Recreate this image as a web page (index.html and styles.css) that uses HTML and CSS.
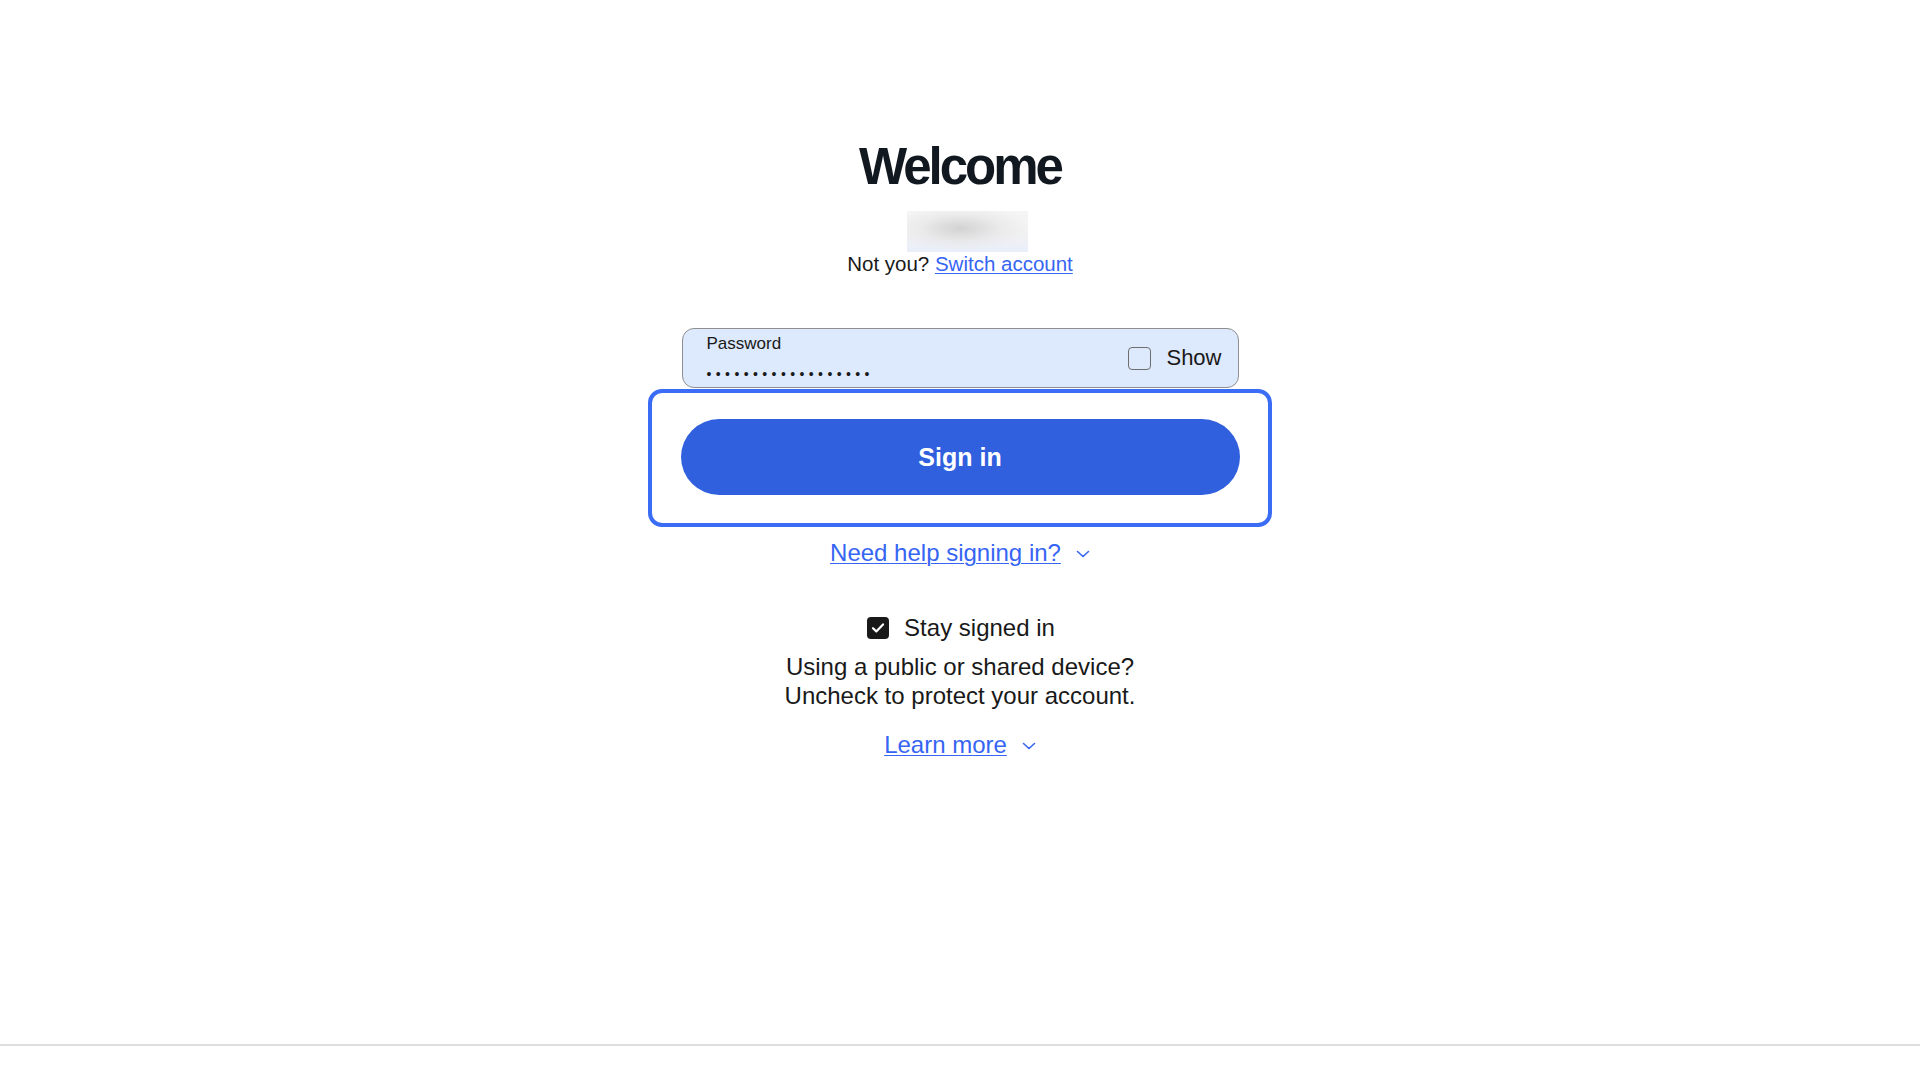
FILE: index.html
```html
<!DOCTYPE html>
<html lang="en">
<head>
<meta charset="utf-8">
<title>Sign in</title>
<link rel="stylesheet" href="styles.css">
</head>
<body>
<div class="page">
  <main class="signin">
    <h1 class="title">Welcome</h1>
    <div class="user-blur" aria-hidden="true"></div>
    <p class="not-you">Not you? <a href="#" class="link">Switch account</a></p>

    <div class="field">
      <div class="field-main">
        <div class="field-label">Password</div>
        <div class="field-dots">••••••••••••••••••</div>
      </div>
      <label class="show">
        <span class="box"></span>
        <span class="show-text">Show</span>
      </label>
    </div>

    <div class="focus-ring">
      <button class="btn" type="button">Sign in</button>
    </div>

    <div class="help">
      <a href="#" class="link">Need help signing in?</a>
      <svg class="chev" width="14" height="8" viewBox="0 0 14 8"><path d="M1.5 1.5 L7 6.5 L12.5 1.5" fill="none" stroke="#3665f3" stroke-width="1.6" stroke-linecap="round" stroke-linejoin="round"/></svg>
    </div>

    <div class="stay">
      <span class="check">
        <svg width="14" height="12" viewBox="0 0 14 12"><path d="M2 6.2 L5.3 9.4 L12 2.4" fill="none" stroke="#fff" stroke-width="2.2" stroke-linecap="round" stroke-linejoin="round"/></svg>
      </span>
      <span>Stay signed in</span>
    </div>
    <p class="note">Using a public or shared device?<br>Uncheck to protect your account.</p>

    <div class="learn">
      <a href="#" class="link">Learn more</a>
      <svg class="chev" width="14" height="8" viewBox="0 0 14 8"><path d="M1.5 1.5 L7 6.5 L12.5 1.5" fill="none" stroke="#3665f3" stroke-width="1.6" stroke-linecap="round" stroke-linejoin="round"/></svg>
    </div>
  </main>
</div>
<footer class="footer"></footer>
</body>
</html>
```
FILE: styles.css
```css
* { box-sizing: border-box; }
html, body { margin: 0; padding: 0; background: #fff; }
body {
  font-family: "Liberation Sans", Arial, sans-serif;
  color: #191919;
}
.page {
  min-height: 1044px;
}
.signin {
  width: 557px;
  margin: 0 auto;
  padding-top: 141px;
  display: flex;
  flex-direction: column;
  align-items: center;
}
.title {
  margin: 0;
  font-size: 51px;
  line-height: 51px;
  font-weight: 700;
  letter-spacing: -3px;
  color: #111820;
}
.user-blur {
  margin-top: 19px;
  margin-left: 15px;
  width: 121px;
  height: 41px;
  background:
    radial-gradient(ellipse 55% 55% at 44% 42%, rgba(205,205,205,0.85), rgba(228,228,229,0.55) 60%, rgba(246,246,247,0) 100%),
    linear-gradient(to bottom, #f5f5f5 0%, #f1f1f2 60%, #e9eefa 100%);
}
.not-you {
  margin: 0;
  font-size: 20.5px;
  line-height: 24px;
  color: #191919;
}
.link {
  color: #3665f3;
  text-decoration: underline;
  text-underline-offset: 2px;
  text-decoration-thickness: 1px;
}
.field {
  margin-top: 52px;
  width: 557px;
  height: 60px;
  border: 1px solid #8f8f8f;
  border-radius: 12px;
  background: #dde9fc;
  display: flex;
  align-items: center;
  padding: 0 16px 0 24px;
}
.field-main {
  flex: 1;
  align-self: stretch;
  padding-top: 5px;
}
.field-label {
  font-size: 17px;
  line-height: 20px;
  color: #191919;
}
.field-dots {
  margin-top: 12px;
  font-size: 14px;
  line-height: 16px;
  letter-spacing: 4.4px;
  color: #191919;
}
.show {
  display: flex;
  align-items: center;
  gap: 15px;
}
.box {
  width: 23px;
  height: 23px;
  border: 1.5px solid #6e6e6e;
  border-radius: 4px;
}
.show-text {
  font-size: 22px;
  line-height: 26px;
}
.focus-ring {
  margin-top: 1px;
  width: 624px;
  border: 4.5px solid #3a6cf6;
  border-radius: 14px;
  padding: 26px 28.5px 27.5px;
}
.btn {
  display: block;
  width: 100%;
  height: 76px;
  border: 0;
  border-radius: 38px;
  background: #3160df;
  color: #fff;
  font-family: "Liberation Sans", Arial, sans-serif;
  font-size: 25px;
  font-weight: 700;
}
.help {
  margin-top: 13px;
  display: flex;
  align-items: center;
  gap: 15px;
  font-size: 24px;
  line-height: 26px;
}
.chev { display: block; margin-top: 2px; }
.stay {
  margin-top: 47px;
  display: flex;
  align-items: center;
  gap: 15px;
  font-size: 24px;
  line-height: 30px;
  color: #191919;
  padding-left: 2px;
}
.check {
  width: 22px;
  height: 22px;
  border-radius: 4px;
  background: #191919;
  display: flex;
  align-items: center;
  justify-content: center;
}
.note {
  margin: 9px 0 0;
  font-size: 24px;
  line-height: 29px;
  text-align: center;
  color: #191919;
}
.learn {
  margin-top: 22px;
  display: flex;
  align-items: center;
  gap: 15px;
  font-size: 24px;
  line-height: 26px;
}
.footer {
  border-top: 2px solid #dedede;
  height: 34px;
}
```
